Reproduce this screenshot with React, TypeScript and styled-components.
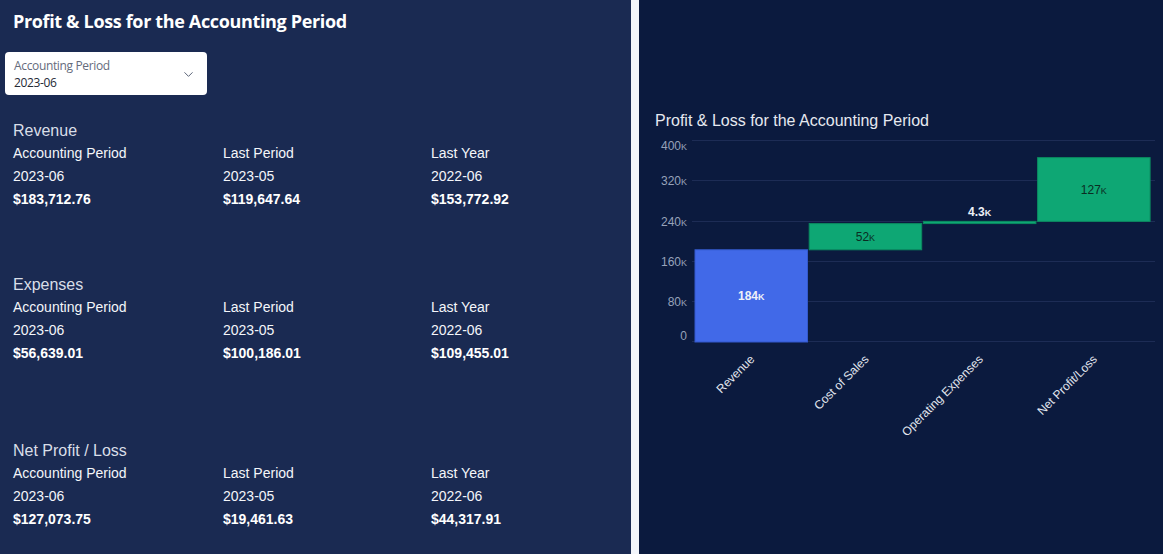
import styled, { createGlobalStyle } from 'styled-components';
import { ChevronDown } from 'lucide-react';

const GlobalStyle = createGlobalStyle`
  html, body {
    margin: 0;
    padding: 0;
    background: #f3f6fb;
  }
  * {
    box-sizing: border-box;
  }
`;

type Metric = { label: string; period: string; amount: string };
type Section = { title: string; spacing: number; metrics: Metric[] };

const sections: Section[] = [
  {
    title: 'Revenue',
    spacing: 62,
    metrics: [
      { label: 'Accounting Period', period: '2023-06', amount: '$183,712.76' },
      { label: 'Last Period', period: '2023-05', amount: '$119,647.64' },
      { label: 'Last Year', period: '2022-06', amount: '$153,772.92' },
    ],
  },
  {
    title: 'Expenses',
    spacing: 74,
    metrics: [
      { label: 'Accounting Period', period: '2023-06', amount: '$56,639.01' },
      { label: 'Last Period', period: '2023-05', amount: '$100,186.01' },
      { label: 'Last Year', period: '2022-06', amount: '$109,455.01' },
    ],
  },
  {
    title: 'Net Profit / Loss',
    spacing: 0,
    metrics: [
      { label: 'Accounting Period', period: '2023-06', amount: '$127,073.75' },
      { label: 'Last Period', period: '2023-05', amount: '$19,461.63' },
      { label: 'Last Year', period: '2022-06', amount: '$44,317.91' },
    ],
  },
];

// waterfall steps, values in thousands
const steps = [
  { name: 'Revenue', from: 0, to: 183.7, label: '184', color: '#4169e8', stroke: '#3459cc', dark: false },
  { name: 'Cost of Sales', from: 183.7, to: 235.9, label: '52', color: '#0ea774', stroke: '#0b8a60', dark: true },
  { name: 'Operating Expenses', from: 235.9, to: 240.3, label: '4.3', color: '#0ea774', stroke: '#0b8a60', dark: false },
  { name: 'Net Profit/Loss', from: 240.3, to: 367.3, label: '127', color: '#0ea774', stroke: '#0b8a60', dark: true },
];

const ticks = [
  { v: 0, text: '0', dy: -6.5 },
  { v: 80, text: '80' },
  { v: 160, text: '160' },
  { v: 240, text: '240' },
  { v: 320, text: '320' },
  { v: 400, text: '400', dy: 5 },
];

const Y0 = 342;
const PX = 0.502;
const yOf = (v: number) => Y0 - v * PX;
const BAR_X = 695;
const BAR_STEP = 114.2;
const BAR_W = 112.5;

const App = () => {
  return (
    <Page>
      <GlobalStyle />
      <LeftPanel>
        <PageTitle>Profit &amp; Loss for the Accounting Period</PageTitle>
        <Select>
          <SelectText>
            <SelectLabel>Accounting Period</SelectLabel>
            <SelectValue>2023-06</SelectValue>
          </SelectText>
          <ChevronDown size={15} strokeWidth={1.6} color="#5b6478" />
        </Select>
        <Sections>
          {sections.map((s) => (
            <Block key={s.title} $spacing={s.spacing}>
              <BlockTitle>{s.title}</BlockTitle>
              <Columns>
                {s.metrics.map((m) => (
                  <Column key={m.label}>
                    <Cell>{m.label}</Cell>
                    <Cell>{m.period}</Cell>
                    <Amount>{m.amount}</Amount>
                  </Column>
                ))}
              </Columns>
            </Block>
          ))}
        </Sections>
      </LeftPanel>
      <RightPanel>
        <ChartTitle>Profit &amp; Loss for the Accounting Period</ChartTitle>
        <Chart viewBox="639 130 524 424" width={524} height={424}>
          {ticks.map((t) => {
            const gy = Math.round(yOf(t.v)) - 0.5;
            return (
              <g key={t.v}>
                <line x1={692} x2={1155} y1={gy} y2={gy} stroke="#1d2c55" strokeWidth={1} />
                <text x={687} y={yOf(t.v) + 4 + (t.dy ?? 0)} textAnchor="end" fill="#97a2ba" fontSize={12}>
                  {t.text}
                  {t.v !== 0 && <tspan fontSize={9}>K</tspan>}
                </text>
              </g>
            );
          })}
          {steps.map((s, i) => {
            const x = BAR_X + i * BAR_STEP;
            const top = yOf(Math.max(s.from, s.to));
            const h = Math.abs(s.to - s.from) * PX;
            const cx = x + BAR_W / 2;
            const thin = h < 14;
            const ly = thin ? top - 5 : top + h / 2 + 4.5;
            return (
              <g key={s.name}>
                <rect x={x} y={top} width={BAR_W} height={h} fill={s.color} stroke={s.stroke} strokeWidth={1} />
                <text
                  x={cx}
                  y={ly}
                  textAnchor="middle"
                  fontSize={12}
                  fontWeight={s.dark ? 400 : 700}
                  fill={s.dark ? '#0b2c22' : '#eef1f8'}
                >
                  {s.label}
                  <tspan fontSize={9}>K</tspan>
                </text>
                <text
                  x={cx + 4}
                  y={360}
                  textAnchor="end"
                  fontSize={12}
                  fill="#e3e7ef"
                  transform={`rotate(-45 ${cx + 4} 360)`}
                >
                  {s.name}
                </text>
              </g>
            );
          })}
        </Chart>
      </RightPanel>
    </Page>
  );
};

export default App;

const Page = styled.div`
  display: flex;
  gap: 8px;
  width: 1163px;
  height: 554px;
  overflow: hidden;
  background: #f3f6fb;
`;

const LeftPanel = styled.section`
  width: 631px;
  flex-shrink: 0;
  background: #1a2a52;
  color: #ffffff;
  padding-top: 9px;
`;

const PageTitle = styled.h1`
  margin: 0 0 0 13px;
  font-family: 'Open Sans', sans-serif;
  font-size: 18px;
  font-weight: 700;
  line-height: 24px;
  letter-spacing: -0.35px;
  color: #ffffff;
`;

const Select = styled.div`
  display: flex;
  align-items: center;
  justify-content: space-between;
  width: 202px;
  height: 43px;
  margin: 19px 0 0 5px;
  padding: 1px 11px 0 9px;
  background: #ffffff;
  border-radius: 4px;
  font-family: 'Open Sans', sans-serif;
  font-size: 12px;
  letter-spacing: -0.35px;
`;

const SelectText = styled.div`
  display: flex;
  flex-direction: column;
  line-height: 17px;
`;

const SelectLabel = styled.span`
  color: #656b7c;
`;

const SelectValue = styled.span`
  color: #252a36;
`;

const Sections = styled.div`
  margin-top: 24px;
  font-family: 'Liberation Sans', Arial, sans-serif;
`;

const Block = styled.div<{ $spacing: number }>`
  margin-bottom: ${(p) => p.$spacing}px;
`;

const BlockTitle = styled.div`
  padding-left: 13px;
  font-size: 16px;
  line-height: 23px;
  color: #d9dee8;
`;

const Columns = styled.div`
  display: grid;
  grid-template-columns: 210px 208px 1fr;
  padding-left: 13px;
`;

const Column = styled.div`
  display: flex;
  flex-direction: column;
`;

const Cell = styled.div`
  font-size: 14px;
  line-height: 23px;
  color: #f4f6fa;
`;

const Amount = styled(Cell)`
  font-weight: 700;
  color: #ffffff;
`;

const RightPanel = styled.section`
  flex: 1;
  background: #0b1a3e;
  padding-top: 112px;
`;

const ChartTitle = styled.h2`
  margin: 0;
  padding-left: 16px;
  font-family: 'Liberation Sans', Arial, sans-serif;
  font-size: 16px;
  font-weight: 400;
  line-height: 18px;
  color: #e6e9f0;
`;

const Chart = styled.svg`
  display: block;
  font-family: 'Liberation Sans', Arial, sans-serif;
`;
